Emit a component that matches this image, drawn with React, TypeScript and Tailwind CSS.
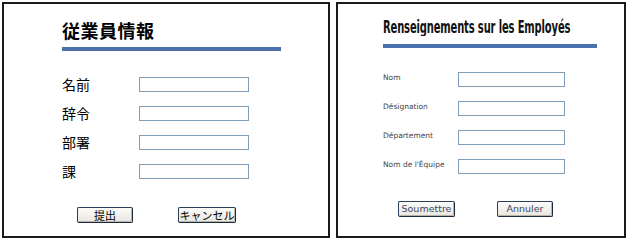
import React from "react";

const jp = { fontFamily: '"Noto Sans CJK JP", "Noto Sans", sans-serif' };

function JpRow({ label }: { label: string }) {
  return (
    <div className="flex items-center h-[15px]">
      <div className="w-[77px] text-[14px] leading-[15px] text-black" style={jp}>{label}</div>
      <div className="w-[110px] h-[15px] border border-[#7f9db9] bg-white" />
    </div>
  );
}

function FrRow({ label }: { label: string }) {
  return (
    <div className="flex items-center h-[15px]">
      <div className="w-[75px] text-[7.5px] leading-[10px] text-[#444] -mt-[3px] font-['DejaVu_Sans',sans-serif]">{label}</div>
      <div className="w-[107px] h-[15px] border border-[#7f9db9] bg-white" />
    </div>
  );
}

function Btn({ children, w, cls }: { children: React.ReactNode; w: string; cls: string }) {
  return (
    <div
      className={`${w} h-[16px] flex items-center justify-center rounded-[2px] border border-[#2c3e5a] border-r-[#1d2a3e] border-b-[#1d2a3e] bg-gradient-to-b from-[#fbfbf9] to-[#e8e6df] shadow-[inset_-1px_-1px_0_#b8b4a8] ${cls}`}
    >
      {children}
    </div>
  );
}

export default function App() {
  return (
    <div className="w-[629px] h-[241px] bg-white flex pl-[2px] pt-[2px] gap-[6px] overflow-hidden">
      <div className="w-[328px] h-[236px] border-2 border-[#1a1a1a] flex flex-col pl-[58px]">
        <div className="mt-[17px] text-[18px] leading-[18px] font-bold text-black tracking-[0.5px]" style={jp}>従業員情報</div>
        <div className="mt-[8px] w-[219px] h-[4px] bg-[#4a71ad]" />
        <div className="mt-[26px] flex flex-col gap-[14px]">
          <JpRow label="名前" />
          <JpRow label="辞令" />
          <JpRow label="部署" />
          <JpRow label="課" />
        </div>
        <div className="mt-[28px] flex gap-[45px] ml-[15px]">
          <Btn w="w-[56px]" cls="text-[11px] text-black"><span style={jp}>提出</span></Btn>
          <Btn w="w-[58px]" cls="text-[11px] text-black"><span style={jp}>キャンセル</span></Btn>
        </div>
      </div>
      <div className="w-[290px] h-[236px] border-2 border-[#1a1a1a] flex flex-col pl-[45px]">
        <div className="mt-[11px] h-[21px] w-[220px] overflow-hidden">
          <span className="inline-block origin-left scale-x-[0.65] text-[17px] leading-[17px] font-bold text-[#111] font-['DejaVu_Sans_Condensed','DejaVu_Sans',sans-serif] tracking-[-0.2px] whitespace-nowrap">
            Renseignements sur les Employés
          </span>
        </div>
        <div className="mt-[8px] w-[214px] h-[4px] bg-[#4a71ad]" />
        <div className="mt-[24px] flex flex-col gap-[14px]">
          <FrRow label="Nom" />
          <FrRow label="Désignation" />
          <FrRow label="Département" />
          <FrRow label="Nom de l'Équipe" />
        </div>
        <div className="mt-[27px] flex gap-[42px] ml-[15px]">
          <Btn w="w-[57px]" cls="text-[9.5px] text-[#3b4766] font-['DejaVu_Sans',sans-serif]">Soumettre</Btn>
          <Btn w="w-[56px]" cls="text-[9.5px] text-[#3b4766] font-['DejaVu_Sans',sans-serif]">Annuler</Btn>
        </div>
      </div>
    </div>
  );
}
